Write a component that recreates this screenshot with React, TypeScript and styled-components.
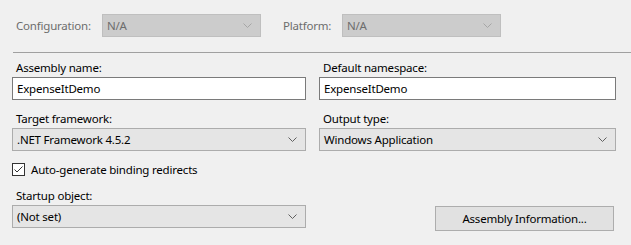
import React from 'react';
import styled, { createGlobalStyle } from 'styled-components';

const GlobalStyle = createGlobalStyle`
  html, body {
    margin: 0;
    padding: 0;
    background: #f0f0f0;
  }
  body {
    font-family: "Segoe UI", "Noto Sans", "Liberation Sans", sans-serif;
    font-size: 11.5px;
    letter-spacing: -0.2px;
    color: #000;
  }
`;

const Page = styled.div`
  width: 631px;
  height: 245px;
  background: #f0f0f0;
  overflow: hidden;
`;

const TopBar = styled.div`
  display: flex;
  align-items: center;
  height: 23px;
  padding: 14px 0 0 16px;
`;

const TopLabel = styled.span<{ $width: number; $offset?: number }>`
  width: ${(p) => p.$width}px;
  margin-left: ${(p) => p.$offset ?? 0}px;
  color: #6d6d6d;
  line-height: 15px;
`;

const Separator = styled.div`
  height: 1px;
  margin: 15px 0 0 13px;
  background: #a0a0a0;
`;

const Form = styled.div`
  display: flex;
  flex-direction: column;
  padding-left: 12px;
`;

const Row = styled.div<{ $top: number }>`
  display: grid;
  grid-template-columns: 294px 297px;
  column-gap: 13px;
  margin-top: ${(p) => p.$top}px;
`;

const Field = styled.div`
  display: flex;
  flex-direction: column;
`;

const Label = styled.label`
  height: 15px;
  line-height: 15px;
  padding-left: 4px;
  margin-bottom: 2px;
  white-space: nowrap;
`;

const TextBox = styled.div`
  box-sizing: border-box;
  height: 23px;
  line-height: 21px;
  padding-left: 4px;
  background: #ffffff;
  border: 1px solid #7a7a7a;
  white-space: nowrap;
`;

const Combo = styled.div<{ $disabled?: boolean; $width?: number }>`
  box-sizing: border-box;
  display: flex;
  align-items: center;
  justify-content: space-between;
  height: 23px;
  width: ${(p) => (p.$width ? `${p.$width}px` : 'auto')};
  padding: 0 8px 0 4px;
  background: ${(p) => (p.$disabled ? '#cccccc' : '#e5e5e5')};
  border: 1px solid ${(p) => (p.$disabled ? '#bfbfbf' : '#acacac')};
  color: ${(p) => (p.$disabled ? '#6d6d6d' : '#000')};
  white-space: nowrap;
`;

const Chevron = ({ disabled }: { disabled?: boolean }) => (
  <svg width="9" height="5" viewBox="0 0 9 5">
    <path
      d="M0.5 0.5 L4.5 4.5 L8.5 0.5"
      fill="none"
      stroke={disabled ? '#a6a6a6' : '#606060'}
      strokeWidth="1"
    />
  </svg>
);

const CheckRow = styled.div`
  display: flex;
  align-items: center;
  gap: 6px;
  margin-top: 12px;
  height: 13px;
`;

const CheckBox = styled.span`
  box-sizing: border-box;
  width: 13px;
  height: 13px;
  border: 1px solid #333333;
  background: #ffffff;
  display: flex;
  align-items: center;
  justify-content: center;
`;

const ButtonCell = styled.div`
  display: flex;
  justify-content: flex-end;
  padding: 18px 2px 0 0;
`;

const Button = styled.button`
  box-sizing: border-box;
  width: 179px;
  height: 25px;
  background: #e1e1e1;
  border: 1px solid #adadad;
  font: inherit;
  letter-spacing: inherit;
  color: #000;
  padding: 0;
`;

export default function App() {
  return (
    <Page>
      <GlobalStyle />
      <TopBar>
        <TopLabel $width={86}>Configuration:</TopLabel>
        <Combo $disabled $width={159}>
          N/A
          <Chevron disabled />
        </Combo>
        <TopLabel $width={59} $offset={22}>Platform:</TopLabel>
        <Combo $disabled $width={159}>
          N/A
          <Chevron disabled />
        </Combo>
      </TopBar>
      <Separator />
      <Form>
        <Row $top={7}>
          <Field>
            <Label>Assembly name:</Label>
            <TextBox>ExpenseItDemo</TextBox>
          </Field>
          <Field>
            <Label>Default namespace:</Label>
            <TextBox>ExpenseItDemo</TextBox>
          </Field>
        </Row>
        <Row $top={11}>
          <Field>
            <Label>Target framework:</Label>
            <Combo>
              .NET Framework 4.5.2
              <Chevron />
            </Combo>
          </Field>
          <Field>
            <Label>Output type:</Label>
            <Combo>
              Windows Application
              <Chevron />
            </Combo>
          </Field>
        </Row>
        <CheckRow>
          <CheckBox>
            <svg width="11" height="11" viewBox="0 0 11 11">
              <path d="M1.5 5.5 L4 8 L9.5 2.5" fill="none" stroke="#333" strokeWidth="1" />
            </svg>
          </CheckBox>
          <span>Auto-generate binding redirects</span>
        </CheckRow>
        <Row $top={12}>
          <Field>
            <Label>Startup object:</Label>
            <Combo>
              (Not set)
              <Chevron />
            </Combo>
          </Field>
          <ButtonCell>
            <Button>Assembly Information...</Button>
          </ButtonCell>
        </Row>
      </Form>
    </Page>
  );
}
